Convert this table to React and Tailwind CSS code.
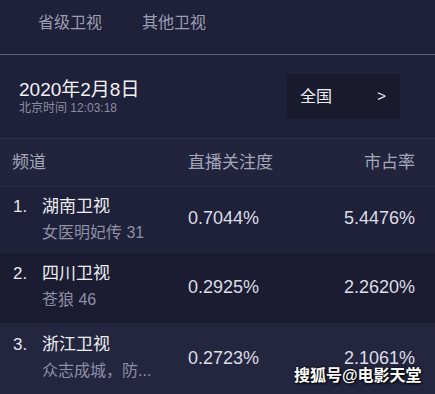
const font = { fontFamily: '"Liberation Sans", "Noto Sans CJK SC", sans-serif' };

const rows = [
  { n: '1.', name: '湖南卫视', sub: '女医明妃传 31', a: '0.7044%', b: '5.4476%', bg: 'bg-[#1f2039]', h: 'h-[66px]', pt: 'pt-[9px]' },
  { n: '2.', name: '四川卫视', sub: '苍狼 46', a: '0.2925%', b: '2.2620%', bg: 'bg-[#1b1c32]', h: 'h-[70px]', pt: 'pt-[10px]' },
  { n: '3.', name: '浙江卫视', sub: '众志成城，防...', a: '0.2723%', b: '2.1061%', bg: 'bg-[#242640]', h: 'h-[72px]', pt: 'pt-[11px]' },
];

export default function App() {
  return (
    <div className="relative w-[435px] h-[394px] overflow-hidden bg-[#1f2039]" style={font}>
      <div className="flex h-[54px] items-center gap-10 pl-[38px] pb-[9px] text-[16px] text-[#9b9db4]">
        <span>省级卫视</span>
        <span>其他卫视</span>
      </div>
      <div className="h-px bg-[#5d5f7c]" />
      <div className="flex h-[83px] items-center justify-between pl-[19px] pr-[35px]">
        <div className="flex flex-col">
          <span className="text-[19px] leading-[22px] text-[#f2f2f6]">2020年2月8日</span>
          <span className="text-[12px] leading-[14px] text-[#8c8ea4]">北京时间 12:03:18</span>
        </div>
        <div className="flex h-[45px] w-[113px] items-center justify-between bg-[#191a2e] pl-[13px] pr-[14px] text-[#f0f0f4]">
          <span className="text-[16px]">全国</span>
          <span className="text-[15px]">&gt;</span>
        </div>
      </div>
      <div className="h-px bg-[#2c2e4a]" />
      <div className="flex h-[47px] items-center justify-between bg-[#22243e] pl-[12px] pr-[20px] text-[17px] text-[#a4a6ba]">
        <span className="w-[176px]">频道</span>
        <span className="flex-1">直播关注度</span>
        <span>市占率</span>
      </div>
      <div className="h-px bg-[#2a2c47]" />
      {rows.map((r) => (
        <div key={r.n} className={`flex ${r.h} ${r.bg} pl-[13px] pr-[20px] ${r.pt}`}>
          <div className="flex w-[175px]">
            <span className="w-[29px] text-[17px] leading-[22px] text-[#e6e7ee]">{r.n}</span>
            <div className="flex flex-col">
              <span className="text-[17px] leading-[22px] text-[#eceef3]">{r.name}</span>
              <span className="mt-[4px] text-[16px] leading-[22px] text-[#8d8fa5]">{r.sub}</span>
            </div>
          </div>
          <div className="flex flex-1 items-center justify-between pb-[12px]">
            <span className="text-[18px] text-[#dcdde6]">{r.a}</span>
            <span className="text-[18px] text-[#dcdde6]">{r.b}</span>
          </div>
        </div>
      ))}
      <div
        className="absolute left-[294px] top-[366px] whitespace-nowrap text-[16px] leading-[20px] font-bold text-white"
        style={{ textShadow: '0 0 3px #000, 1px 1px 2px #000' }}
      >
        搜狐号@电影天堂
      </div>
    </div>
  );
}
